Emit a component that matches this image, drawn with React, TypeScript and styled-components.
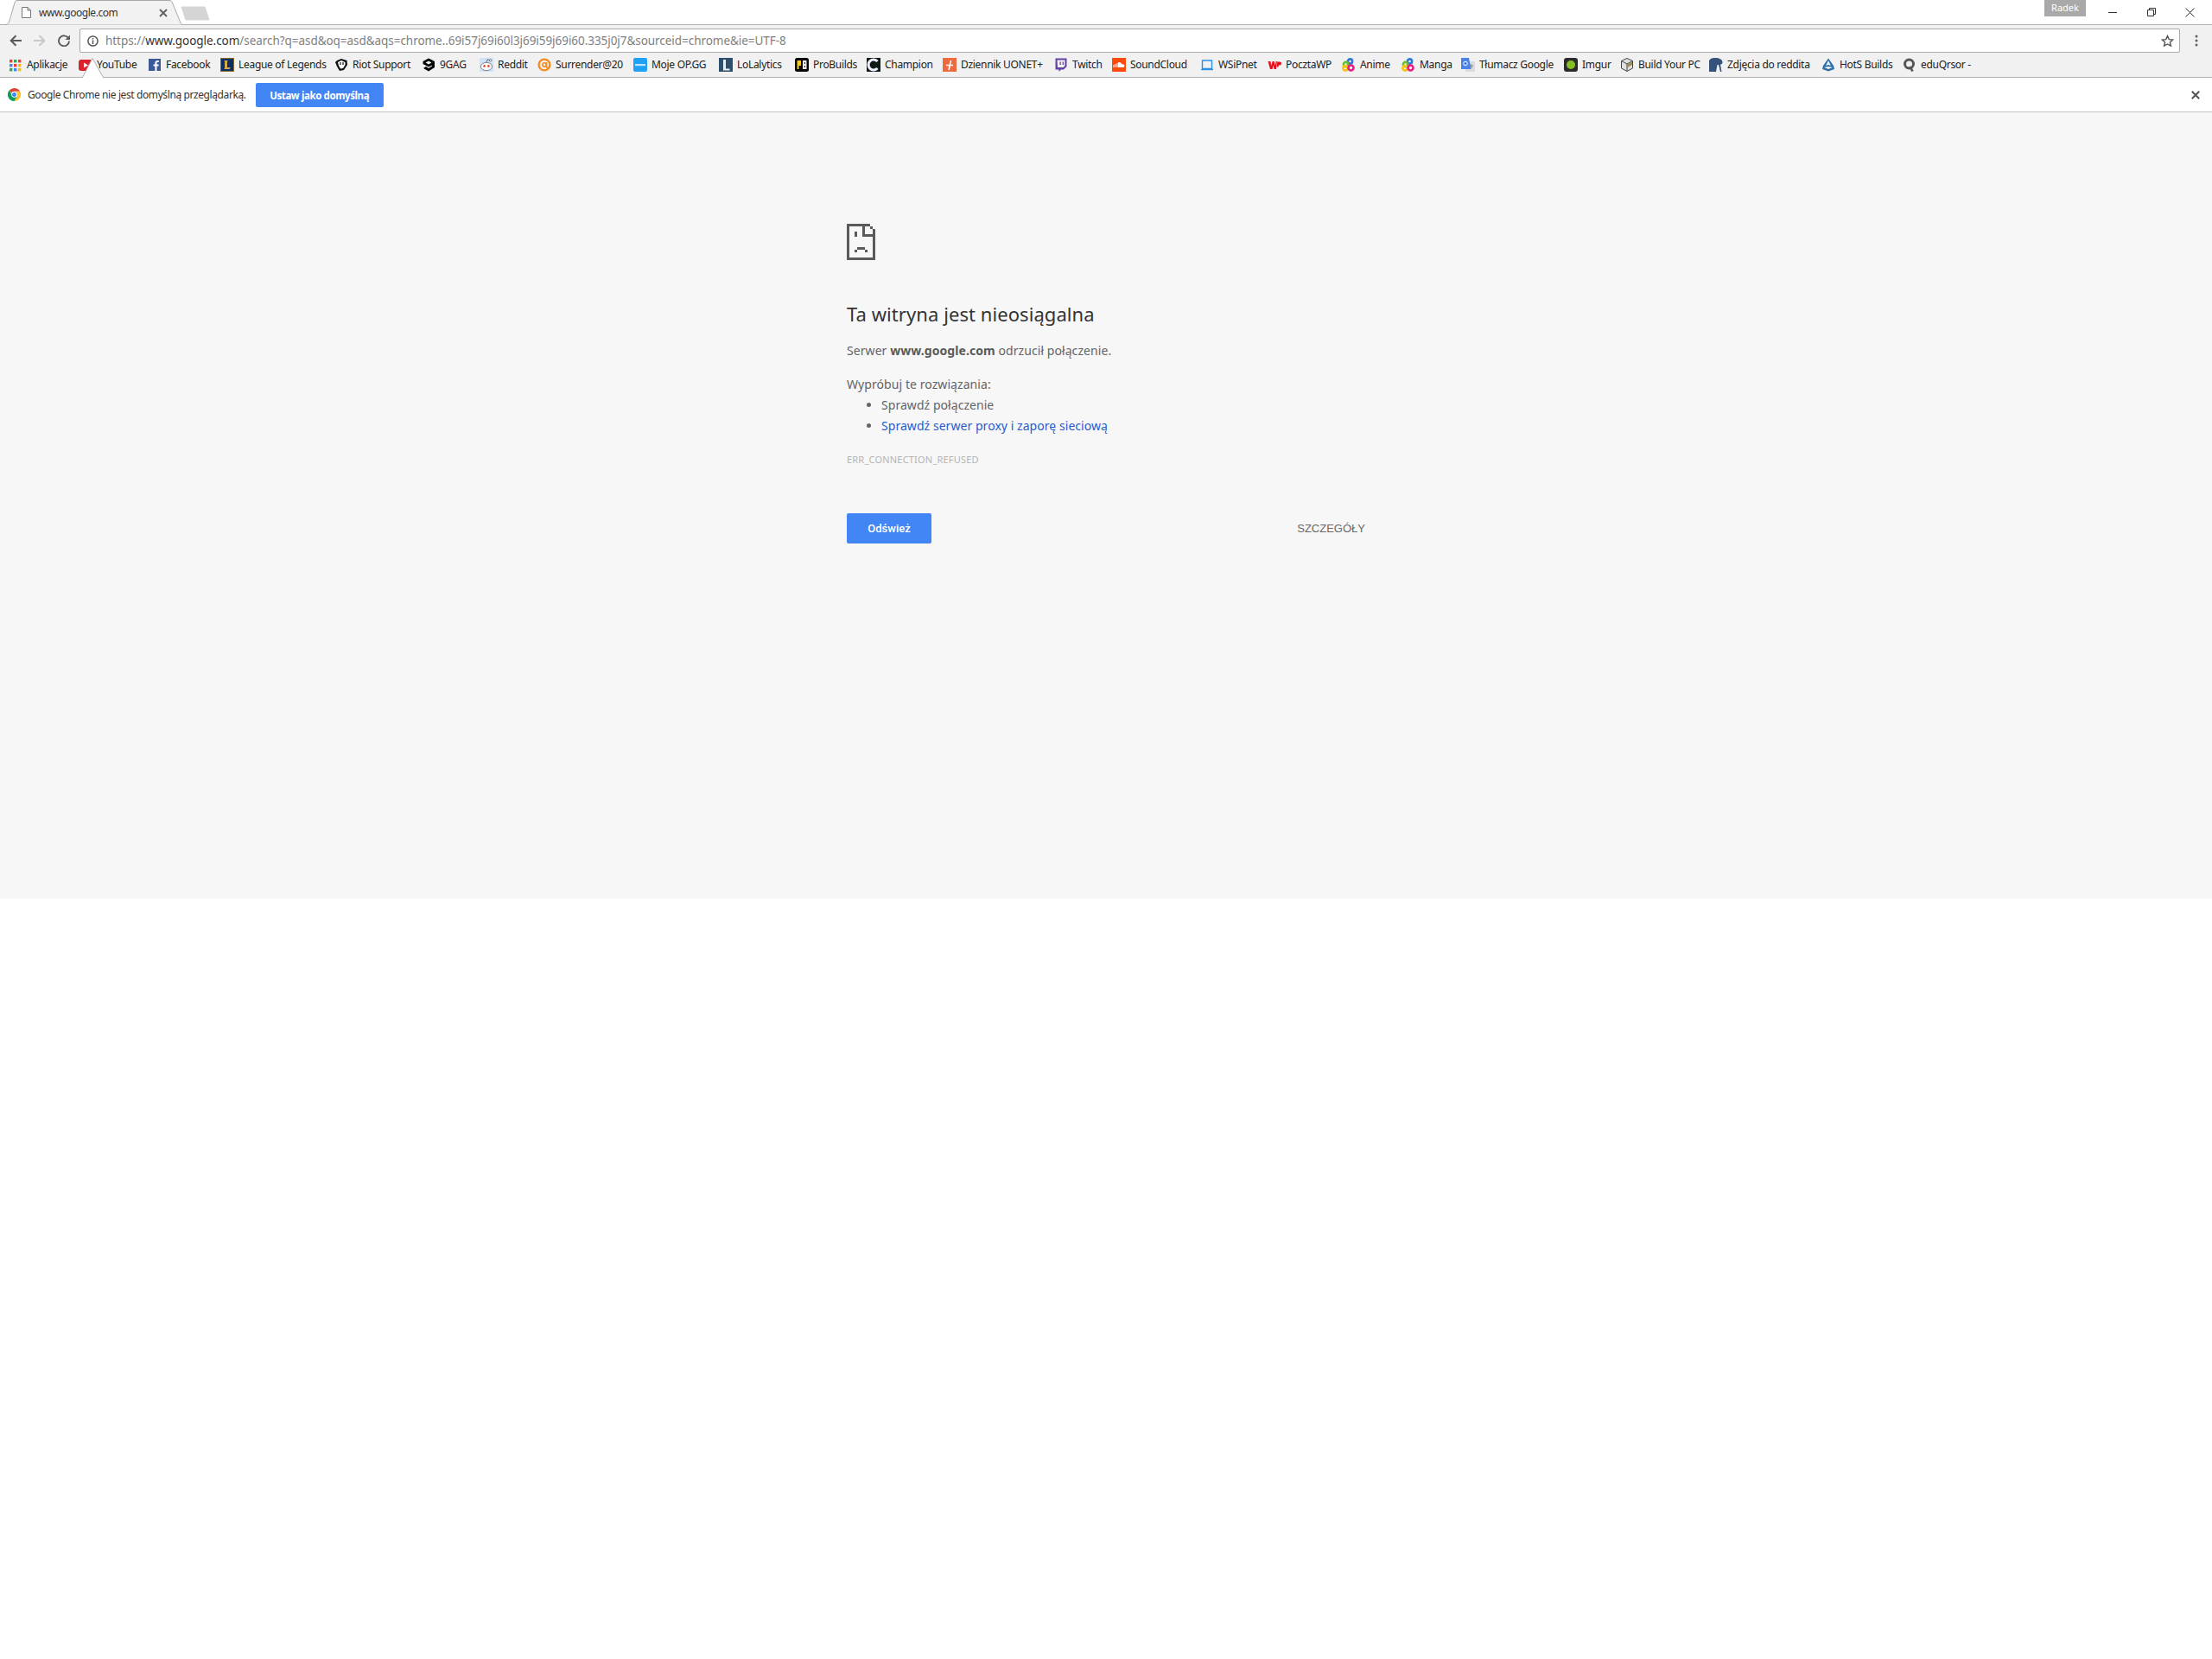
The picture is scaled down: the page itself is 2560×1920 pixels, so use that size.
import React, { FC } from 'react';
import styled, { createGlobalStyle } from 'styled-components';

const UI_FONT = '"Noto Sans", "Open Sans", "Liberation Sans", sans-serif';

const GlobalStyle = createGlobalStyle`
  html, body {
    margin: 0;
    padding: 0;
    background: #fff;
  }
  body {
    font-family: ${UI_FONT};
  }
`;

const Window = styled.div`
  width: 2560px;
  height: 1920px;
  background: #fff;
  display: flex;
  flex-direction: column;
  overflow: hidden;
`;

const TitleBar = styled.div`
  height: 28px;
  border-bottom: 1px solid #b4b4b4;
  display: flex;
  padding-left: 6px;
  background: #fff;
`;

const Tab = styled.div`
  position: relative;
  width: 206px;
  height: 29px;
  display: flex;
  align-items: center;
  padding-left: 19px;
  box-sizing: border-box;
  z-index: 1;
  font-size: 12px;
  letter-spacing: -0.45px;
  color: #333;
`;

const TabShape = styled.svg`
  position: absolute;
  left: 0;
  top: 0;
  z-index: -1;
`;

const TabTitle = styled.span`
  margin-left: 9px;
  flex: 1;
`;

const TabClose = styled.svg`
  margin-right: 18px;
`;

const NewTab = styled.svg`
  margin: 7px 0 0 -3px;
`;

const Spacer = styled.div`
  flex: 1;
`;

const ProfileBadge = styled.div`
  width: 48px;
  height: 19px;
  background: #a9a9a9;
  color: #fff;
  font-size: 11px;
  line-height: 18px;
  text-align: center;
  margin-right: 8px;
`;

const CaptionButton = styled.div`
  width: 45px;
  height: 28px;
  display: flex;
  align-items: center;
  justify-content: center;
`;

const WindowControls = styled.div`
  display: flex;
  padding-right: 3px;
`;

const Toolbar = styled.div`
  height: 32px;
  background: #f1f1f1;
  box-sizing: border-box;
  display: flex;
  align-items: flex-start;
  padding: 4px 0 0 4px;
`;

const NavButton = styled.div`
  width: 28px;
  height: 28px;
  display: flex;
  align-items: center;
  justify-content: center;
`;

const Omnibox = styled.div`
  flex: 1;
  height: 28px;
  box-sizing: border-box;
  margin-left: 4px;
  background: #fff;
  border: 1px solid #a9a9a9;
  border-radius: 2px;
  display: flex;
  align-items: center;
  padding: 0 6px 0 8px;
  font-size: 13.5px;
  color: #808080;
`;

const UrlText = styled.div`
  flex: 1;
  margin-left: 8px;
  white-space: nowrap;
  letter-spacing: -0.05px;
  margin-top: -1px;

  b {
    font-weight: 400;
    color: #333;
  }
`;

const MenuButton = styled.div`
  width: 37px;
  height: 28px;
  display: flex;
  align-items: center;
  justify-content: center;
`;

const BookmarksBar = styled.div`
  height: 29px;
  box-sizing: border-box;
  background: #f1f1f1;
  border-bottom: 1px solid #b0b0b0;
  display: flex;
  align-items: center;
  gap: 13px;
  padding-left: 10px;
`;

const Bookmark = styled.div`
  display: flex;
  align-items: center;
  gap: 5px;
  font-size: 12px;
  color: #222;
`;

const BookmarkLabel = styled.span<{ $width: number }>`
  display: block;
  width: ${props => props.$width}px;
  white-space: nowrap;
  letter-spacing: -0.3px;
  margin-top: -1px;
`;

const InfoBar = styled.div`
  position: relative;
  height: 40px;
  box-sizing: border-box;
  background: #fff;
  border-bottom: 1px solid #c6c6c6;
  display: flex;
  align-items: center;
  padding: 0 14px 0 9px;
  font-size: 12px;
  color: #333;
`;

const InfoArrow = styled.svg`
  position: absolute;
  left: 95px;
  top: -23px;
`;

const InfoText = styled.span`
  margin-left: 8px;
  letter-spacing: -0.4px;
`;

const InfoButton = styled.div`
  margin-left: 11px;
  width: 148px;
  height: 28px;
  margin-top: 1px;
  background: #4285f4;
  border-radius: 2px;
  color: #fff;
  font-weight: 700;
  font-size: 11.5px;
  letter-spacing: -0.4px;
  display: flex;
  align-items: center;
  justify-content: center;
`;

const ErrorPage = styled.main`
  height: 910px;
  background: #f7f7f7;
  padding-top: 129px;
  box-sizing: border-box;
`;

const ErrorContent = styled.div`
  width: 600px;
  margin: 0 auto;
  color: #646464;
  font-size: 15px;
`;

const SadPage = styled.svg`
  display: block;
`;

const Heading = styled.h1`
  margin: 47px 0 0;
  font-size: 22px;
  font-weight: 400;
  letter-spacing: 0.07px;
  line-height: 30px;
  color: #333;
`;

const Paragraph = styled.p<{ $gap: number }>`
  margin: ${props => props.$gap}px 0 0;
  line-height: 20px;
  font-size: 14px;
  letter-spacing: 0.07px;

  strong {
    font-weight: 700;
    color: #5a5a5a;
  }
`;

const Suggestions = styled.ul`
  margin: 2px 0 0;
  padding-left: 40px;
  font-size: 14px;
  letter-spacing: 0.05px;
  line-height: 24px;
`;

const Link = styled.a`
  color: #2a5bd0;
  text-decoration: none;
`;

const ErrorCode = styled.div`
  margin-top: 17px;
  font-size: 11px;
  letter-spacing: 0.2px;
  line-height: 20px;
  color: #b4b4b4;
`;

const Actions = styled.div`
  margin-top: 52px;
  display: flex;
  align-items: center;
  justify-content: space-between;
`;

const ReloadButton = styled.div`
  width: 98px;
  height: 35px;
  background: #4285f4;
  border-radius: 2px;
  color: #fff;
  font-family: "Roboto", "Liberation Sans", sans-serif;
  font-weight: 500;
  font-size: 13px;
  display: flex;
  align-items: center;
  justify-content: center;
`;

const DetailsButton = styled.div`
  font-family: "Liberation Sans", sans-serif;
  font-size: 13px;
  color: #696969;
`;

const Icon: FC<{ size?: number; children: React.ReactNode }> = ({ size = 16, children }) => (
  <svg width={size} height={size} viewBox="0 0 16 16" style={{ display: 'block', flexShrink: 0 }}>
    {children}
  </svg>
);

const favicons: Record<string, React.ReactNode> = {
  apps: (
    <g>
      {[
        ['#ea4335', '#34a853', '#ea4335'],
        ['#4285f4', '#ea4335', '#fbbc05'],
        ['#34a853', '#4285f4', '#fbbc05'],
      ].map((row, y) =>
        row.map((fill, x) => <rect key={`${x}-${y}`} x={1 + x * 5} y={2 + y * 5} width={3.4} height={3.4} fill={fill} />)
      )}
    </g>
  ),
  youtube: (
    <g>
      <rect x="0" y="2" width="16" height="13" rx="3" fill="#d9222a" />
      <path d="M6 5.5 L11 8.5 L6 11.5 Z" fill="#fff" />
    </g>
  ),
  facebook: (
    <g>
      <rect x="1" y="1" width="14" height="14" fill="#3b5998" />
      <path d="M10.5 15 V9.6 H12.4 L12.7 7.5 H10.5 V6.2 C10.5 5.5 10.8 5 11.7 5 H12.8 V3.1 C12.5 3.1 11.9 3 11.2 3 C9.5 3 8.4 4 8.4 5.9 V7.5 H6.6 V9.6 H8.4 V15 Z" fill="#fff" />
    </g>
  ),
  lol: (
    <g>
      <rect x="0.5" y="0.5" width="15" height="15" fill="#0c2f63" stroke="#8a6a2c" />
      <path d="M4 3 H9 L8 4 V11 H12 L10.5 13 H4 L5 12 V4 Z" fill="#d3a94a" />
    </g>
  ),
  riot: (
    <g>
      <path d="M3 3 L8 1 L14.5 3 L15 8 L11 14 L6 15 L3 10 L1 5 Z" fill="#111" />
      <path d="M4 5 L8 3 L12.5 5 L12.5 8 L10 12 L7 12.5 L5 9 Z" fill="#fff" />
      <path d="M7 5 V8 M10 5 V8" stroke="#111" strokeWidth="1.2" />
    </g>
  ),
  ninegag: (
    <g>
      <path d="M8 0.5 L15 4 V11 L8 15.5 L2 12 L5 10 L8 12 L12 9.6 V8.4 L8 10.5 L1.5 7 V4 Z" fill="#000" />
      <path d="M8 3.5 L11.5 5.5 L8 7.5 L4.5 5.5 Z" fill="#f1f1f1" />
    </g>
  ),
  reddit: (
    <g>
      <rect x="0" y="0" width="16" height="16" fill="#cee3f8" />
      <ellipse cx="8" cy="10" rx="6.5" ry="4.6" fill="#fff" stroke="#555" strokeWidth="0.7" />
      <circle cx="5.6" cy="9.4" r="1.3" fill="#e2401b" />
      <circle cx="10.4" cy="9.4" r="1.3" fill="#e2401b" />
      <path d="M8 5 L9 1.8 L12 2.6" stroke="#555" fill="none" strokeWidth="0.8" />
      <circle cx="12.6" cy="2.8" r="1.2" fill="#fff" stroke="#555" strokeWidth="0.7" />
    </g>
  ),
  surrender: (
    <g>
      <circle cx="8" cy="8" r="6.4" fill="none" stroke="#f58a1f" strokeWidth="2.4" />
      <circle cx="8" cy="8" r="2.2" fill="none" stroke="#f58a1f" strokeWidth="1.6" />
      <path d="M10.5 5 V11 L14 12" stroke="#f58a1f" strokeWidth="1.5" fill="none" />
    </g>
  ),
  opgg: (
    <g>
      <rect x="0" y="0" width="16" height="16" rx="2" fill="#1ea1f7" />
      <rect x="2" y="7" width="12" height="2.2" fill="#bfe4fd" />
    </g>
  ),
  lolalytics: (
    <g>
      <rect x="0" y="0" width="16" height="16" fill="#2d4f6c" />
      <path d="M5 2 H8 V12.5 H12.5 V14.5 H5 Z" fill="#e8eef2" />
    </g>
  ),
  probuilds: (
    <g>
      <rect x="0" y="0" width="16" height="16" rx="2.5" fill="#050505" />
      <path d="M2.5 3 H7 V9 H4.6 V13 H2.5 Z" fill="#f7c61a" />
      <path d="M9 3 H13.5 V13 H9 Z" fill="#eee" />
      <path d="M10.8 5 H11.8 V7 H10.8 Z M10.8 9 H11.8 V11 H10.8 Z" fill="#050505" />
    </g>
  ),
  champion: (
    <g>
      <rect x="0" y="0" width="16" height="16" fill="#0d1a14" />
      <path d="M12.5 4 A6 6 0 1 0 12.5 12" fill="none" stroke="#eef" strokeWidth="3" />
    </g>
  ),
  dziennik: (
    <g>
      <rect x="0" y="0" width="16" height="16" fill="#ee6a3e" />
      <path d="M4 8.5 H12 M9.5 3 L7 14" stroke="#fff" strokeWidth="1.6" fill="none" />
    </g>
  ),
  twitch: (
    <g>
      <path d="M1.5 0.5 H14.5 V10 L11 13.5 H8 L5.5 16 V13.5 H1.5 Z" fill="#6441a4" />
      <path d="M3.5 2.5 H12.5 V9 L10.5 11 H4 Z" fill="#f1f1f1" />
      <path d="M6.5 4.5 H7.8 V8 H6.5 Z M9.6 4.5 H10.9 V8 H9.6 Z" fill="#6441a4" />
    </g>
  ),
  soundcloud: (
    <g>
      <rect x="0" y="0" width="16" height="16" fill="#ff4a0b" />
      <path d="M2 8 V11 M4 7 V11 M6 6 V11" stroke="#fff" strokeWidth="1" />
      <path d="M7 5.5 C9 4.4 11 5.6 11.4 7.4 C13 7 14.4 8 14.4 9.3 C14.4 10.4 13.5 11 12.6 11 H7 Z" fill="#fff" />
    </g>
  ),
  wsip: (
    <g>
      <path d="M2.5 3 H13.5 V12.5 H2.5 Z" fill="none" stroke="#2a91e8" strokeWidth="1.4" />
      <path d="M1 13.5 H15" stroke="#2a91e8" strokeWidth="1.4" />
    </g>
  ),
  wp: (
    <g>
      <path d="M0.5 4 H3.4 L4.4 9 L5.6 4 H7.6 L8.8 9 L9.7 4 H11 L9.9 13 H7.6 L6.6 8.6 L5.5 13 H3 Z" fill="#e2101e" />
      <path d="M11.2 4.5 H14 C15.5 4.5 16 5.4 16 6.5 C16 7.8 15 8.6 13.8 8.6 H12.8 L12.5 10.5 H10.8 Z" fill="#e2101e" />
    </g>
  ),
  rings: (
    <g fill="none" strokeWidth="2.6">
      <circle cx="9.5" cy="4" r="2.6" stroke="#2b7bd6" />
      <circle cx="4.5" cy="7.5" r="2.6" stroke="#6cbc2f" />
      <circle cx="4" cy="12" r="2.6" stroke="#f5c518" />
      <circle cx="10.5" cy="11.5" r="3" stroke="#ea1e84" />
    </g>
  ),
  translate: (
    <g>
      <rect x="5" y="4" width="11" height="12" fill="#dcdcdc" />
      <path d="M11 7 L12.5 12 M9 9 H14" stroke="#888" strokeWidth="1" />
      <path d="M0 0 H9 L11.5 13 H0 Z" fill="#4a82ec" />
      <circle cx="5" cy="6.5" r="2.3" fill="none" stroke="#fff" strokeWidth="1" />
    </g>
  ),
  imgur: (
    <g>
      <rect x="0" y="0" width="16" height="16" rx="3" fill="#2b2b2b" />
      <circle cx="8" cy="8" r="5" fill="#85bf25" />
    </g>
  ),
  buildpc: (
    <g>
      <path d="M8 0.5 L14.5 3.5 V12 L8 15.5 L1.5 12 V3.5 Z" fill="#e0e0e0" stroke="#444" strokeWidth="1" />
      <path d="M1.5 3.5 L8 7 L14.5 3.5 M8 7 V15.5" stroke="#444" fill="none" strokeWidth="1" />
      <path d="M8.6 7.5 L14 4.6 V8 L8.6 11 Z" fill="#9a8a50" />
    </g>
  ),
  walrus: (
    <g>
      <path d="M0 16 V4 C0 1.5 3 0 7 0 C12 0 15.5 2 15.5 5 C15.5 7 14 7.5 13 7.5 L14.5 16 H13 L11 8 L9.5 8 L8 16 Z" fill="#34527a" />
    </g>
  ),
  hots: (
    <g>
      <path d="M8 0.5 L14 9 L15 13 L8 15.5 L1 13 L2 9 Z" fill="#2f6da8" />
      <path d="M8 3 L11 9 L8 8 L5 9 Z M3 11 L8 10 L13 11 L8 13 Z" fill="#e4f0fa" />
    </g>
  ),
  edu: (
    <g>
      <circle cx="7.5" cy="7" r="5" fill="none" stroke="#555" strokeWidth="3" />
      <path d="M8.5 10 L11.5 15.5" stroke="#555" strokeWidth="2.6" />
    </g>
  ),
};

const bookmarks = [
  { icon: 'apps', label: 'Aplikacje', width: 47 },
  { icon: 'youtube', label: 'YouTube', width: 46 },
  { icon: 'facebook', label: 'Facebook', width: 50 },
  { icon: 'lol', label: 'League of Legends', width: 98 },
  { icon: 'riot', label: 'Riot Support', width: 67 },
  { icon: 'ninegag', label: '9GAG', width: 33 },
  { icon: 'reddit', label: 'Reddit', width: 33 },
  { icon: 'surrender', label: 'Surrender@20', width: 77 },
  { icon: 'opgg', label: 'Moje OP.GG', width: 65 },
  { icon: 'lolalytics', label: 'LoLalytics', width: 54 },
  { icon: 'probuilds', label: 'ProBuilds', width: 49 },
  { icon: 'champion', label: 'Champion', width: 54 },
  { icon: 'dziennik', label: 'Dziennik UONET+', width: 95 },
  { icon: 'twitch', label: 'Twitch', width: 33 },
  { icon: 'soundcloud', label: 'SoundCloud', width: 68 },
  { icon: 'wsip', label: 'WSiPnet', width: 44 },
  { icon: 'wp', label: 'PocztaWP', width: 52 },
  { icon: 'rings', label: 'Anime', width: 35 },
  { icon: 'rings', label: 'Manga', width: 35 },
  { icon: 'translate', label: 'Tłumacz Google', width: 85 },
  { icon: 'imgur', label: 'Imgur', width: 31 },
  { icon: 'buildpc', label: 'Build Your PC', width: 69 },
  { icon: 'walrus', label: 'Zdjęcia do reddita', width: 96 },
  { icon: 'hots', label: 'HotS Builds', width: 60 },
  { icon: 'edu', label: 'eduQrsor -', width: 58 },
];

// the dead page icon is an 11 x 14 grid of 3px cells
const sadPageCells = [
  [0, 0, 9, 1], [9, 1, 1, 1], [10, 2, 1, 12], [0, 0, 1, 14], [0, 13, 11, 1],
  [6, 0, 1, 5], [6, 4, 5, 1], [3, 3, 1, 2], [4, 9, 3, 1], [3, 10, 1, 1], [7, 10, 1, 1],
];

const App: FC = () => (
  <Window>
    <GlobalStyle />
    <TitleBar>
      <Tab>
        <TabShape width="206" height="29" viewBox="0 0 206 29">
          <path
            d="M0 28.5 C3 28.5 4 27 5 24 L11 3 C11.6 1.2 12.6 .5 14 .5 L190 .5 C191.6 .5 192.6 1.2 193.4 3 L202 24 C203 27 204 28.5 206 28.5"
            fill="#f2f2f2"
            stroke="#a8a8a8"
          />
        </TabShape>
        <svg width="11" height="13" viewBox="0 0 11 13">
          <path d="M.5 .5 H7 L10.5 4 V12.5 H.5 Z M7 .5 V4 H10.5" fill="#fff" stroke="#777" />
        </svg>
        <TabTitle>www.google.com</TabTitle>
        <TabClose width="10" height="10" viewBox="0 0 10 10">
          <path d="M1 1 L9 9 M9 1 L1 9" stroke="#5f5f5f" strokeWidth="1.8" />
        </TabClose>
      </Tab>
      <NewTab width="34" height="17" viewBox="0 0 34 17">
        <path d="M1 1 L28 1 L33 16 L6 16 Z" fill="#d5d5d5" stroke="#d5d5d5" strokeLinejoin="round" />
      </NewTab>
      <Spacer />
      <ProfileBadge>Radek</ProfileBadge>
      <WindowControls>
        <CaptionButton>
          <svg width="10" height="10" viewBox="0 0 10 10"><path d="M0 5.5 H10" stroke="#333" /></svg>
        </CaptionButton>
        <CaptionButton>
          <svg width="10" height="10" viewBox="0 0 10 10" fill="none">
            <path d="M.5 2.5 H7.5 V9.5 H.5 Z M2.5 2.5 V.5 H9.5 V7.5 H7.5" stroke="#333" />
          </svg>
        </CaptionButton>
        <CaptionButton>
          <svg width="11" height="11" viewBox="0 0 11 11"><path d="M.5 .5 L10.5 10.5 M10.5 .5 L.5 10.5" stroke="#333" /></svg>
        </CaptionButton>
      </WindowControls>
    </TitleBar>
    <Toolbar>
      <NavButton>
        <svg width="14" height="14" viewBox="0 0 14 14" fill="none">
          <path d="M14 7 H2 M7.5 1.3 L1.7 7 L7.5 12.7" stroke="#5a5a5a" strokeWidth="2" />
        </svg>
      </NavButton>
      <NavButton>
        <svg width="14" height="14" viewBox="0 0 14 14" fill="none">
          <path d="M0 7 H12 M6.5 1.3 L12.3 7 L6.5 12.7" stroke="#c8c8c8" strokeWidth="2" />
        </svg>
      </NavButton>
      <NavButton>
        <svg width="14" height="14" viewBox="0 0 14 14" fill="none">
          <path d="M12 4 A6 6 0 1 0 13 7.5" stroke="#5a5a5a" strokeWidth="1.9" />
          <path d="M14 0.5 V6 H8.5 Z" fill="#5a5a5a" />
        </svg>
      </NavButton>
      <Omnibox>
        <svg width="13" height="13" viewBox="0 0 13 13" fill="none">
          <circle cx="6.5" cy="6.5" r="5.6" stroke="#555" strokeWidth="1.5" />
          <path d="M6.5 5.5 V10 M6.5 3 V4.4" stroke="#555" strokeWidth="1.5" />
        </svg>
        <UrlText>
          https://<b>www.google.com</b>/search?q=asd&amp;oq=asd&amp;aqs=chrome..69i57j69i60l3j69i59j69i60.335j0j7&amp;sourceid=chrome&amp;ie=UTF-8
        </UrlText>
        <svg width="15" height="15" viewBox="0 0 15 15" fill="none">
          <path d="M7.5 1.6 L9.3 5.6 L13.7 6 L10.4 8.9 L11.4 13.2 L7.5 11 L3.6 13.2 L4.6 8.9 L1.3 6 L5.7 5.6 Z" stroke="#555" strokeWidth="1.4" />
        </svg>
      </Omnibox>
      <MenuButton>
        <svg width="4" height="14" viewBox="0 0 4 14" fill="#5f5f5f">
          <circle cx="2" cy="2" r="1.5" />
          <circle cx="2" cy="7" r="1.5" />
          <circle cx="2" cy="12" r="1.5" />
        </svg>
      </MenuButton>
    </Toolbar>
    <BookmarksBar>
      {bookmarks.map(b => (
        <Bookmark key={b.label}>
          <Icon>{favicons[b.icon]}</Icon>
          <BookmarkLabel $width={b.width}>{b.label}</BookmarkLabel>
        </Bookmark>
      ))}
    </BookmarksBar>
    <InfoBar>
      <InfoArrow width="25" height="24" viewBox="0 0 25 24">
        <path d="M0 23.5 L12 .5 L25 23.5" fill="#fff" stroke="#b0b0b0" />
      </InfoArrow>
      <svg width="15" height="15" viewBox="0 0 16 16">
        <path d="M8 0 A8 8 0 0 1 15 4 H8 A4 4 0 0 0 4.4 6.2 L2 2.6 A8 8 0 0 1 8 0 Z" fill="#db4437" />
        <path d="M15 4 A8 8 0 0 1 8 16 L11.5 10 A4 4 0 0 0 11.4 6 L8 4 Z" fill="#fbc02d" />
        <path d="M2 2.6 L5.5 9 A4 4 0 0 0 11.5 10 L8 16 A8 8 0 0 1 2 2.6 Z" fill="#0f9d58" />
        <circle cx="8" cy="8" r="3.2" fill="#4285f4" stroke="#fff" strokeWidth="1" />
      </svg>
      <InfoText>Google Chrome nie jest domyślną przeglądarką.</InfoText>
      <InfoButton>Ustaw jako domyślną</InfoButton>
      <Spacer />
      <svg width="10" height="10" viewBox="0 0 10 10">
        <path d="M.8 .8 L9.2 9.2 M9.2 .8 L.8 9.2" stroke="#555" strokeWidth="2" />
      </svg>
    </InfoBar>
    <ErrorPage>
      <ErrorContent>
        <SadPage width="33" height="42" viewBox="0 0 11 14" shapeRendering="crispEdges">
          {sadPageCells.map(([x, y, w, h]) => (
            <rect key={`${x}-${y}-${w}`} x={x} y={y} width={w} height={h} fill="#5a5a5a" />
          ))}
        </SadPage>
        <Heading>Ta witryna jest nieosiągalna</Heading>
        <Paragraph $gap={18}>Serwer <strong>www.google.com</strong> odrzucił połączenie.</Paragraph>
        <Paragraph $gap={19}>Wypróbuj te rozwiązania:</Paragraph>
        <Suggestions>
          <li>Sprawdź połączenie</li>
          <li><Link>Sprawdź serwer proxy i zaporę sieciową</Link></li>
        </Suggestions>
        <ErrorCode>ERR_CONNECTION_REFUSED</ErrorCode>
        <Actions>
          <ReloadButton>Odśwież</ReloadButton>
          <DetailsButton>SZCZEGÓŁY</DetailsButton>
        </Actions>
      </ErrorContent>
    </ErrorPage>
  </Window>
);

export default App;
